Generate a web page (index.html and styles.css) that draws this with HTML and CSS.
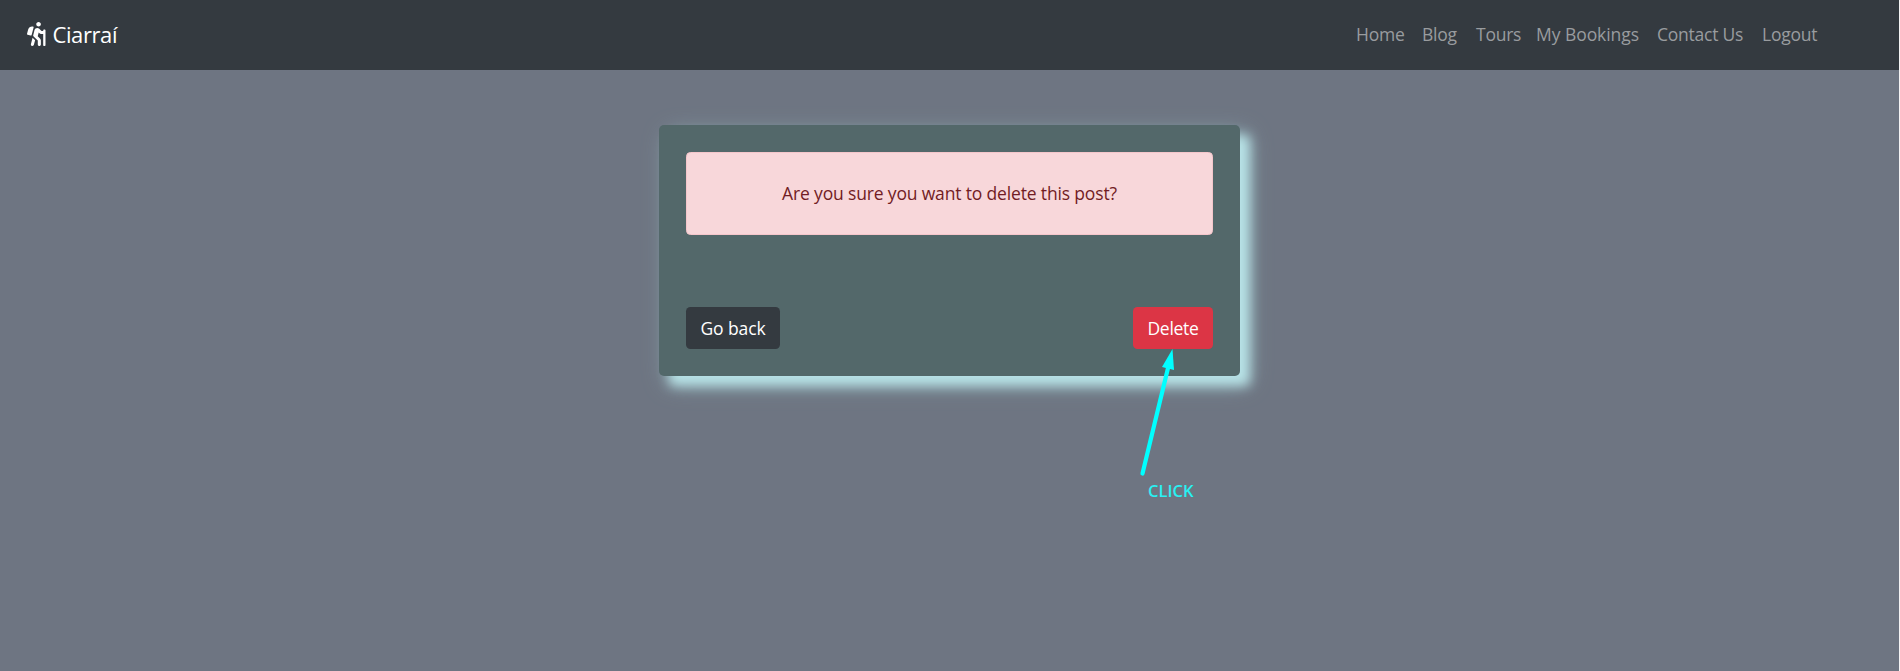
FILE: index.html
```html
<!DOCTYPE html>
<html lang="en">
<head>
<meta charset="utf-8">
<title>Ciarraí</title>
<link rel="stylesheet" href="styles.css">
</head>
<body>
<header class="navbar">
  <a class="brand"><svg class="brand-icon" viewBox="0 0 384 512" preserveAspectRatio="none"><path fill="currentColor" d="M80.95 472.23c-4.28 17.16 6.14 34.53 23.28 38.81 2.61.66 5.22.95 7.8.95 14.33 0 27.37-9.7 31.02-24.23l25.24-100.97-52.78-52.78-34.56 138.22zm14.89-196.12L137 117c2.19-8.42-3.14-16.95-11.92-19.06-43.88-10.52-88.35 15.07-99.32 57.17L.49 253.24c-2.19 8.42 3.14 16.95 11.92 19.06l63.56 15.25c8.79 2.1 17.68-3.02 19.87-11.44zM368 160h-16c-8.84 0-16 7.16-16 16v16h-34.75l-46.78-46.78C243.38 134.11 228.61 128 212.91 128c-27.02 0-50.47 18.3-57.03 44.52l-26.92 107.72a32.012 32.012 0 0 0 8.42 30.39L224 397.25V480c0 17.67 14.33 32 32 32s32-14.33 32-32v-82.75c0-17.09-6.66-33.16-18.75-45.25l-46.82-46.82c.15-.5.49-.89.62-1.41l19.89-79.57 22.43 22.43c6 6 14.14 9.38 22.62 9.38h48v240c0 8.84 7.16 16 16 16h16c8.84 0 16-7.16 16-16V176c.01-8.84-7.15-16-15.99-16zM240 96c26.51 0 48-21.49 48-48S266.51 0 240 0s-48 21.49-48 48 21.49 48 48 48z"/></svg><span class="brand-name">Ciarraí</span></a>
  <nav class="nav">
    <a class="home">Home</a>
    <a class="blog">Blog</a>
    <a class="tours">Tours</a>
    <a class="bookings">My Bookings</a>
    <a class="contact">Contact Us</a>
    <a class="logout">Logout</a>
  </nav>
</header>
<main class="card">
  <div class="alert">Are you sure you want to delete this post?</div>
  <div class="actions">
    <button class="btn btn-dark">Go back</button>
    <button class="btn btn-danger">Delete</button>
  </div>
</main>
<svg class="arrow" width="40" height="130" viewBox="0 0 40 130"><path d="M7.500 124.500L33.500 17" stroke="#0ff" stroke-width="4.200" stroke-linecap="round"/><path d="M37.500 0L39 21L27 18Z" fill="#0ff"/></svg>
<span class="click">CLICK</span>
</body>
</html>
```
FILE: styles.css
```css
* { box-sizing: border-box; }
body {
  margin: 0;
  height: 671px;
  overflow: hidden;
  position: relative;
  border-right: 1px solid #f4f4f5;
  background: #6e7582;
  font: 17.5px/27px "Open Sans", "Noto Sans", sans-serif;
}
.navbar {
  height: 70px;
  padding: 0 80px 2px 27px;
  display: flex;
  align-items: center;
  justify-content: space-between;
  background: #343a40;
}
.brand { display: flex; align-items: center; gap: 7px; color: #fff; font-size: 22px; }
.brand-icon { width: 18.5px; height: 24px; }
.brand-name { letter-spacing: -0.4px; }
.nav { display: flex; gap: 18px; color: #999c9f; white-space: nowrap; }
.nav a { letter-spacing: -0.25px; }
.home { width: 48px; }
.blog { width: 36px; }
.tours { width: 42px; }
.nav .bookings { width: 103px; letter-spacing: -0.05px; }
.contact { width: 87px; }
.logout { width: 57px; }
.card {
  width: 581px;
  height: 251px;
  margin: 55px auto 0;
  padding: 27px;
  border-radius: 5px;
  background: #53686a;
  box-shadow: 10px 10px 12px #b8e3e7, 8px 8px 25px rgba(176, 224, 230, .4);
}
.alert {
  height: 83px;
  display: flex;
  align-items: center;
  justify-content: center;
  border: 1px solid #f5c6cb;
  border-radius: 4.5px;
  background: #f8d7da;
  color: #721c24;
  letter-spacing: -0.16px;
}
.actions { display: flex; justify-content: space-between; margin-top: 72px; }
.btn {
  height: 42px;
  padding: 0;
  border: 0;
  border-radius: 4.5px;
  color: #fff;
  font: inherit;
  letter-spacing: -0.1px;
}
.btn-dark { width: 94px; background: #343a40; }
.btn-danger { width: 80px; background: #dc3545; letter-spacing: -0.3px; }
.arrow { position: absolute; left: 1135px; top: 349px; }
.click {
  position: absolute;
  left: 1148px;
  top: 477px;
  color: #29f0f2;
  font-size: 16.5px;
  font-weight: 600;
}
```
